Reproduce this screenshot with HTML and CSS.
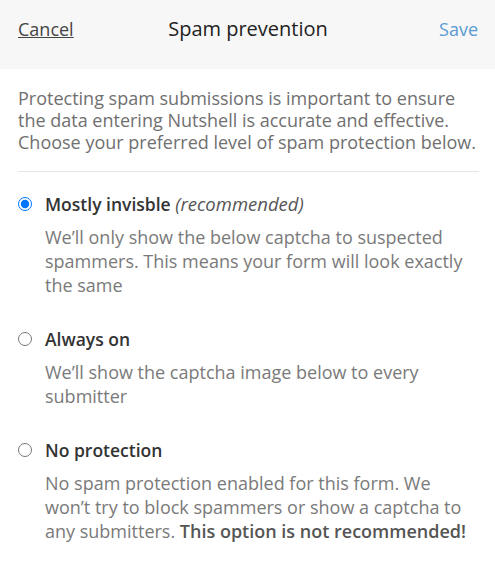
FILE: index.html
```html
<!DOCTYPE html>
<html>
<head>
  <title>Spam prevention</title>
  <link rel="stylesheet" href="styles.css">
</head>
<body>
  <div class="topbar">
    <a href="#" class="btn-cancel">Cancel</a>
    <h2>Spam prevention</h2>
    <a href="#" class="btn-save">Save</a>
  </div>

  <div class="content">
    <p class="intro">Protecting spam submissions is important to ensure the data entering Nutshell is accurate and effective. Choose your preferred level of spam protection below.</p>

    <form class="options">
      <label class="option">
        <span class="option-head">
          <input type="radio" name="spam" value="invisible" checked>
          <span class="option-title">Mostly invisble <em>(recommended)</em></span>
        </span>
        <span class="option-desc">We’ll only show the below captcha to suspected spammers. This means your form will look exactly the same</span>
      </label>

      <label class="option">
        <span class="option-head">
          <input type="radio" name="spam" value="always">
          <span class="option-title">Always on</span>
        </span>
        <span class="option-desc">We’ll show the captcha image below to every submitter</span>
      </label>

      <label class="option">
        <span class="option-head">
          <input type="radio" name="spam" value="none">
          <span class="option-title">No protection</span>
        </span>
        <span class="option-desc">No spam protection enabled for this form. We won’t try to block spammers or show a captcha to any submitters. <strong>This option is not recommended!</strong></span>
      </label>
    </form>
  </div>
</body>
</html>
```

FILE: styles.css
```css
body {
  margin: 0;
  font-family: "Open Sans", Arial, sans-serif;
  background: #fff;
  color: #333;
}
.topbar {
  display: grid;
  grid-template-columns: 1fr auto 1fr;
  align-items: center;
  height: 69px;
  padding: 0 17px 12px 18px;
  box-sizing: border-box;
  background: #f7f7f7;
}
.topbar h2 {
  margin: 0;
  font-size: 20px;
  font-weight: normal;
  color: #222;
}
.btn-cancel {
  justify-self: start;
  font-size: 18px;
  color: #444;
  text-decoration: underline;
}
.btn-save {
  justify-self: end;
  font-size: 18px;
  color: #5c9bd1;
  text-decoration: none;
}
.content {
  padding: 0 16px 0 18px;
}
.intro {
  margin: 18px 0 0;
  padding-bottom: 18px;
  font-size: 18px;
  line-height: 22px;
  color: #707070;
  border-bottom: 1px solid #e6e6e6;
}
.options {
  display: flex;
  flex-direction: column;
  gap: 30px;
  padding-top: 20px;
}
.option {
  display: flex;
  flex-direction: column;
  gap: 9px;
  cursor: pointer;
}
.option-head {
  display: flex;
  align-items: center;
  gap: 13px;
}
.option-head input {
  margin: 0;
  width: 14px;
  height: 14px;
}
.option-title {
  font-size: 17.5px;
  line-height: 24px;
  font-weight: 600;
  color: #333;
}
.option-title em {
  font-size: 18.5px;
  font-weight: normal;
  color: #555;
}
.option-desc {
  padding-left: 27px;
  font-size: 18px;
  line-height: 24px;
  color: #7a7a7a;
}
.option-desc strong {
  font-weight: 600;
  color: #555;
}
```
